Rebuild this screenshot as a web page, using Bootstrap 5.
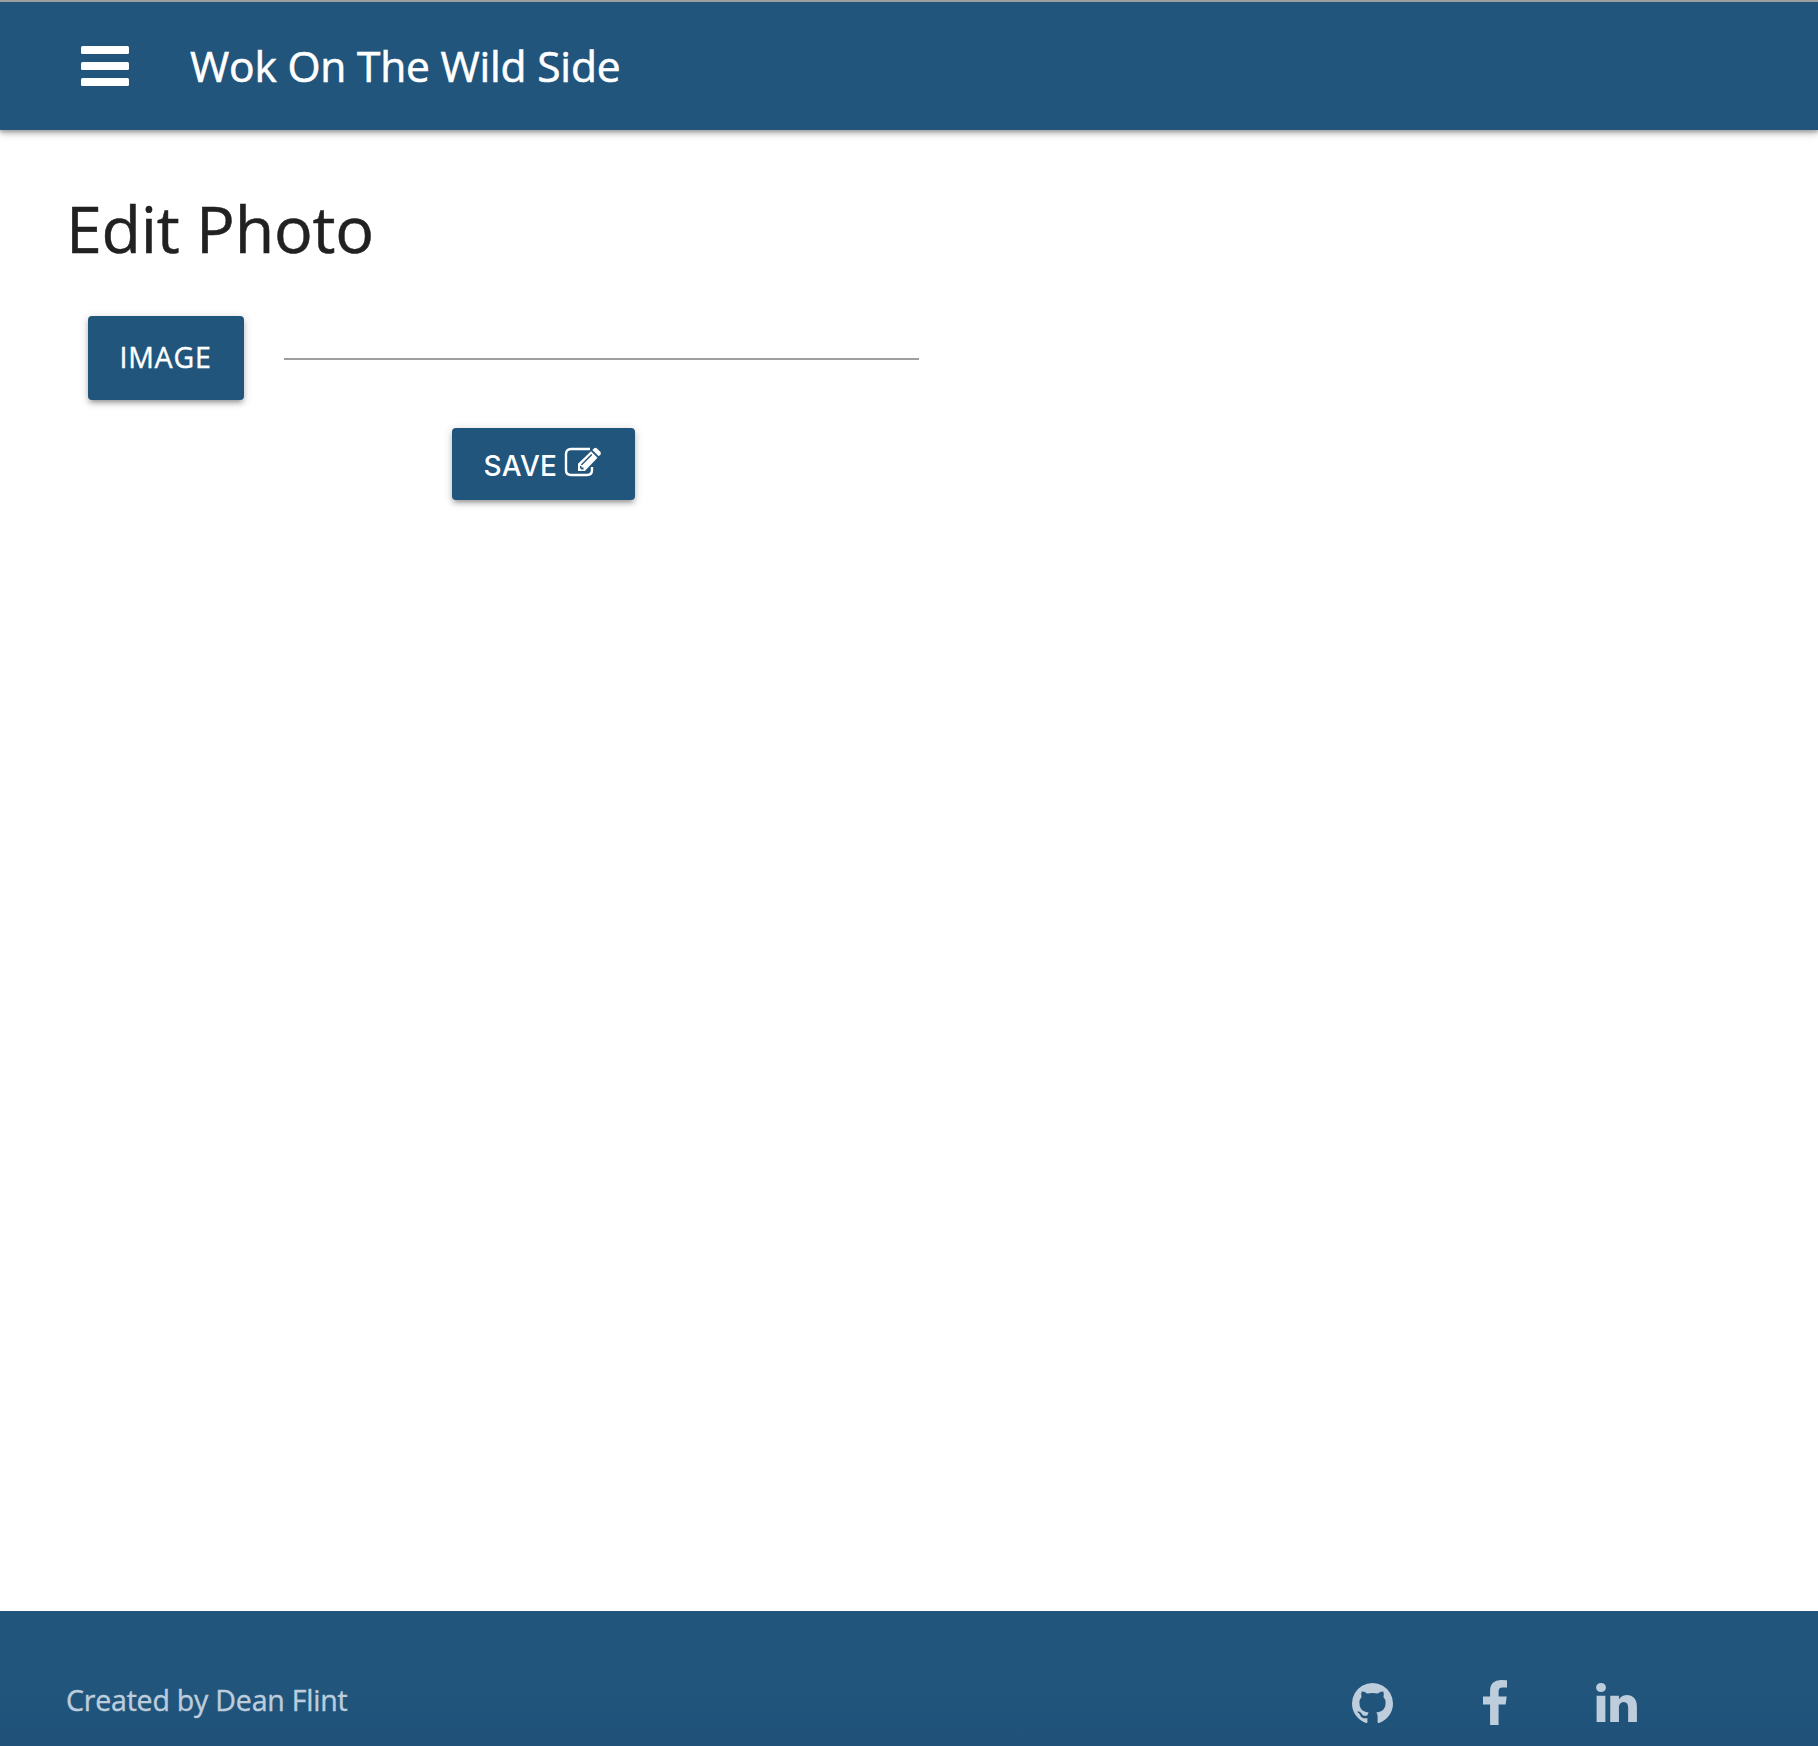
<!DOCTYPE html>
<html lang="en">
<head>
<meta charset="utf-8">
<meta name="viewport" content="width=device-width, initial-scale=1">
<title>Wok On The Wild Side</title>
<link href="https://cdn.jsdelivr.net/npm/bootstrap@5.3.0/dist/css/bootstrap.min.css" rel="stylesheet">
<style>
:root { --brand: #21557c; }
body { font-family: "Open Sans", "Noto Sans", sans-serif; font-size: 29px; line-height: 1.5; color: #212121; background: #fff; }
.topbar { height: 130px; background: var(--brand); border-top: 2px solid #9e9e9e; padding: 0 0 0 81px; box-shadow: 0 4px 4px 0 rgba(0,0,0,.14), 0 2px 2px 0 rgba(0,0,0,.12), 0 2px 10px 0 rgba(0,0,0,.2); }
.menu-toggle { width: 48px; height: 40px; margin-right: 61px; }
.menu-toggle svg, .social svg, .btn svg { display: block; }
.site-name { font-size: 42.5px; line-height: 1; letter-spacing: -.2px; color: #fff; -webkit-text-stroke: .6px #fff; }
.page { padding: 0 67px; }
.page-title { font-size: 64.500px; line-height: 72px; letter-spacing: -.25px; margin: 62px 0 52px -1px; font-weight: 400; -webkit-text-stroke: .5px #212121; }
.photo-form { width: 852px; }
.file-row { padding-left: 21px; gap: 40px; }
.btn-brand { --bs-btn-color: #fff; --bs-btn-bg: var(--brand); --bs-btn-hover-color: #fff; --bs-btn-hover-bg: #2b6a99; --bs-btn-border-width: 0; --bs-btn-border-radius: 4px; --bs-btn-padding-x: 32px; --bs-btn-padding-y: 0; letter-spacing: 1px; box-shadow: 0 4px 4px 0 rgba(0,0,0,.14), 0 6px 2px -4px rgba(0,0,0,.12), 0 2px 10px 0 rgba(0,0,0,.2); }
.btn-file { width: 156px; height: 84px; font-size: 28.5px; letter-spacing: .8px; padding-right: 33px; padding-bottom: 2px; -webkit-text-stroke: .4px #fff; }
.btn-save { width: 183px; height: 72px; font-family: Inter, sans-serif; font-size: 28px; letter-spacing: .3px; font-weight: 500; margin-top: 28px; padding-top: 3px; }
.save-row { padding-left: 100px; }
.btn-save svg { margin: -7px 0 0 7px; }
.file-path { height: 2px; background: #9e9e9e; margin-top: 2px; }
.site-footer { height: 135px; padding: 45px 181px 0 66px; background: linear-gradient(#21557c 60%, #1f5179); color: #bdcddc; }
.credit { font-size: 28.5px; letter-spacing: -.2px; padding-bottom: 1px; -webkit-text-stroke: .4px #bdcddc; }
.social { gap: 89px; padding-top: 2px; }
.social a:first-child { margin-right: 1px; padding-top: 2px; }
</style>
</head>
<body class="d-flex flex-column min-vh-100">
<nav class="topbar d-flex align-items-center">
  <a class="menu-toggle" href="#" aria-label="Menu">
    <svg width="48" height="40" fill="#fff"><rect width="48" height="8" rx="1.5"/><rect y="16" width="48" height="8" rx="1.5"/><rect y="32" width="48" height="8" rx="1.5"/></svg>
  </a>
  <a class="site-name text-decoration-none" href="#">Wok On The Wild Side</a>
</nav>
<main class="page flex-grow-1">
  <h1 class="page-title">Edit Photo</h1>
  <form class="photo-form">
    <div class="file-row d-flex align-items-center">
      <button type="button" class="btn btn-brand btn-file d-flex align-items-center justify-content-center">IMAGE</button>
      <div class="file-path flex-grow-1"></div>
    </div>
    <div class="save-row d-flex justify-content-center">
      <button type="button" class="btn btn-brand btn-save d-flex align-items-center">SAVE
        <svg class="flex-shrink-0" width="38" height="30" viewBox="0 0 38 30" fill="none">
          <path d="M26 2H7Q2 2 2 7V23Q2 28 7 28H23Q28 28 28 23V20" stroke="#fff" stroke-width="2.400"/>
          <path fill="#fff" fill-rule="evenodd" d="M14 24V16.800L27 4.300L33.500 10.800L20.800 24ZM18 18.200L28.300 8L27.300 7L16.800 17.500ZM16 19V21L17.500 22.500H19.500V20.500H17.500V19Z"/>
          <path fill="#fff" d="M28.300 3L30.300 1.200Q31.500 .4 32.700 1.200L36.500 5Q37.300 6.200 36.500 7.400L34.700 9.300Z"/>
        </svg>
      </button>
    </div>
  </form>
</main>
<footer class="site-footer d-flex align-items-center justify-content-between">
  <span class="credit">Created by Dean Flint</span>
  <div class="social d-flex align-items-center">
    <a href="#" aria-label="GitHub"><svg width="41" height="41" viewBox="128 128 1536 1536" fill="#bdcddc"><path d="M896 128q209 0 385.500 103t279.500 279.500 103 385.500q0 251-146.500 451.500t-378.500 277.500q-27 5-40-7t-13-30q0-3 .5-76.500t.5-134.500q0-97-52-142 57-6 102.500-18t94-39 81-66.500 53-105 20.500-150.500q0-119-79-206 37-91-8-204-28-9-81 11t-92 44l-38 24q-93-26-192-26t-192 26q-16-11-42.500-27t-83.500-38.500-85-13.500q-45 113-8 204-79 87-79 206 0 85 20.500 150t52.500 105 80.500 67 94 39 102.500 18q-39 36-49 103-21 10-45 15t-57 5-65.500-21.500-55.500-62.500q-19-32-48.500-52t-49.500-24l-20-3q-21 0-29 4.500t-5 11.500 9 14 13 12l7 5q22 10 43.500 38t31.500 51l10 23q13 38 44 61.500t67 30 69.500 7 55.500-3.500l23-4q0 38 .5 88.500t.5 54.500q0 18-13 30t-40 7q-232-77-378.500-277.500t-146.500-451.500q0-209 103-385.500t279.500-279.500 385.500-103z"/></svg></a>
    <a href="#" aria-label="Facebook"><svg width="24" height="45" viewBox="479 0 864 1664" preserveAspectRatio="none" fill="#bdcddc"><path d="M1343 12v264h-157q-86 0-116 36t-30 108v189h293l-39 296h-254v759h-306v-759h-255v-296h255v-218q0-186 104-288.500t277-102.500q147 0 228 12z"/></svg></a>
    <a href="#" aria-label="LinkedIn"><svg width="41" height="39" viewBox="128 148 1536 1468" fill="#bdcddc"><path d="M477 625v991h-330v-991h330zm21-306q1 73-50.500 122t-135.500 49h-2q-82 0-132-49t-50-122q0-74 51.500-122.500t134.500-48.500 133 48.500 51 122.500zm1166 729v568h-329v-530q0-105-40.500-164.500t-126.500-59.500q-63 0-105.500 34.500t-63.500 85.500q-11 30-11 81v553h-329q2-399 2-647t-1-296l-1-48h329v144h-2q20-32 41-56t56.500-52 87-43.500 114.500-15.500q171 0 275 113.500t104 332.500z"/></svg></a>
  </div>
</footer>
<script src="https://cdn.jsdelivr.net/npm/bootstrap@5.3.0/dist/js/bootstrap.bundle.min.js"></script>
</body>
</html>
